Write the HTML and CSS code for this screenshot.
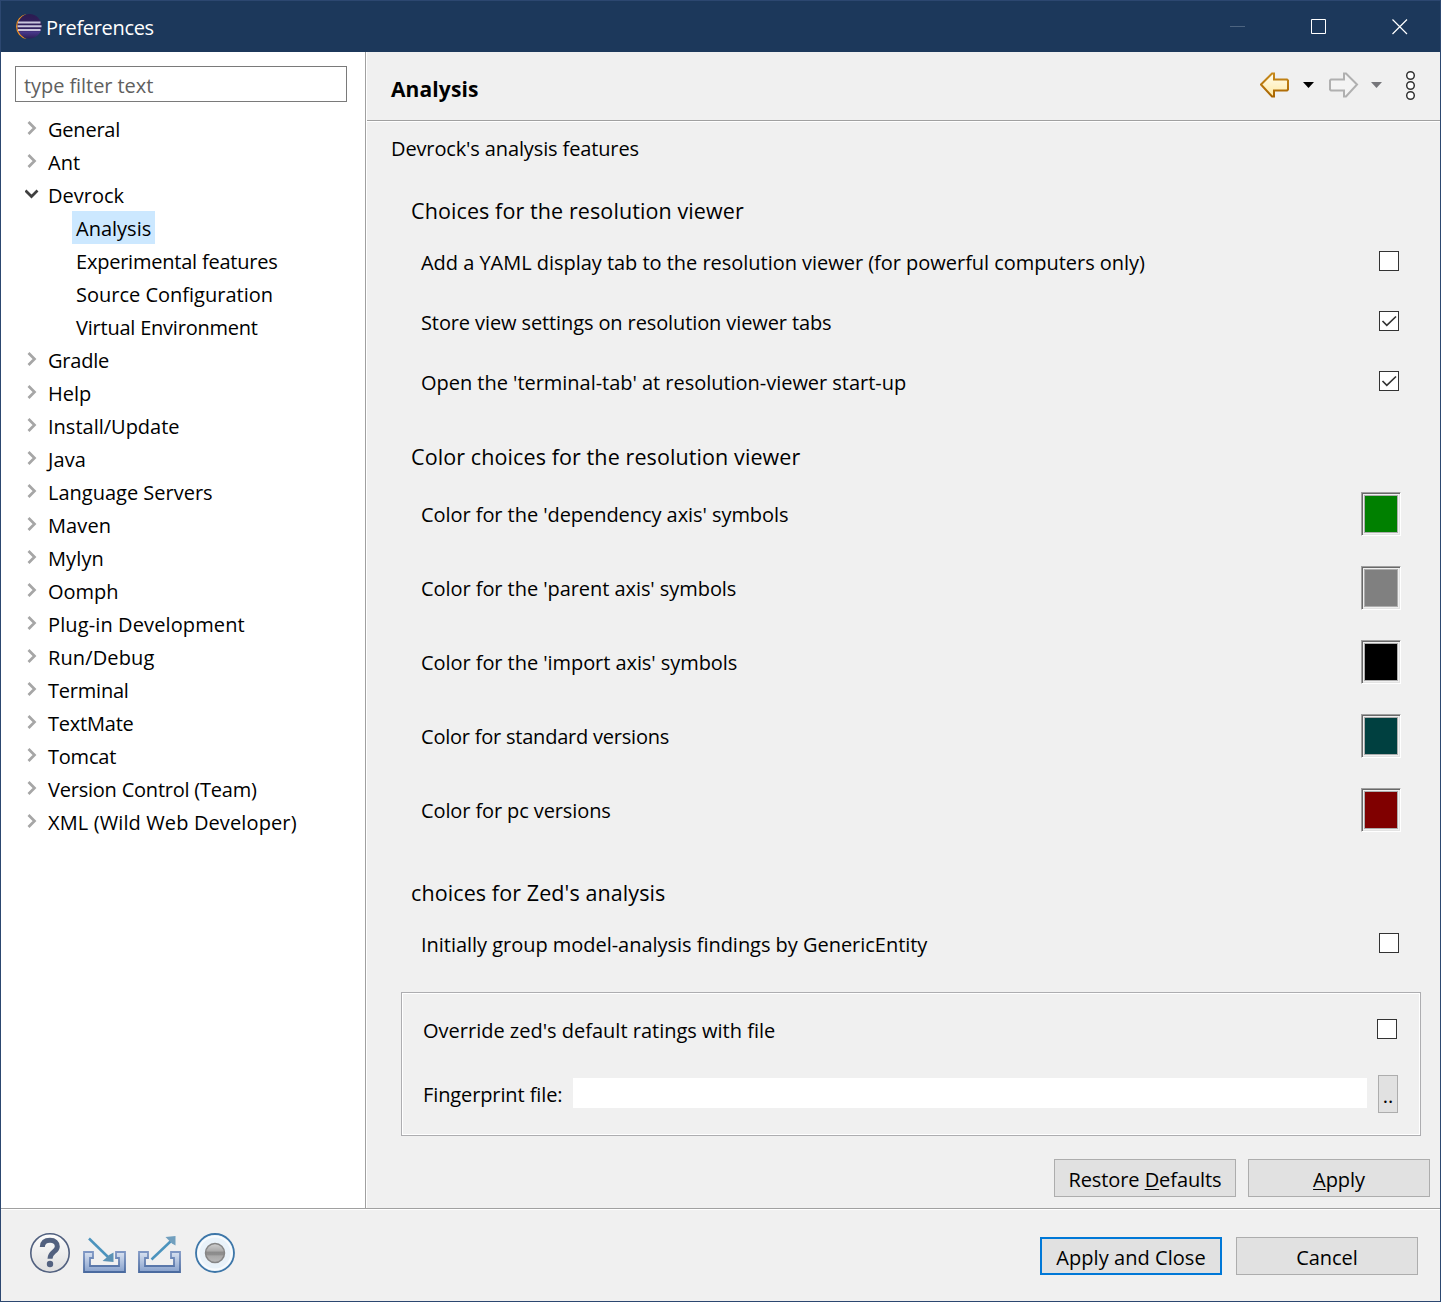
FILE: index.html
```html
<!DOCTYPE html>
<html lang="en">
<head>
<meta charset="utf-8">
<title>Preferences</title>
<link rel="stylesheet" href="styles.css">
</head>
<body>
<svg class="defs" width="0" height="0" aria-hidden="true">
  <defs>
    <linearGradient id="gold" x1="0" y1="0" x2="0" y2="1"><stop offset="0" stop-color="#fffdf0"/><stop offset="1" stop-color="#ffe9a3"/></linearGradient>
    <linearGradient id="goldEdge" x1="0" y1="0" x2="0" y2="1"><stop offset="0" stop-color="#c78a1c"/><stop offset="1" stop-color="#a86400"/></linearGradient>
    <linearGradient id="tray" x1="0" y1="0" x2="0" y2="1"><stop offset="0" stop-color="#d9e2f1"/><stop offset="1" stop-color="#87a1cc"/></linearGradient>
    <linearGradient id="trayEdge" x1="0" y1="0" x2="0" y2="1"><stop offset="0" stop-color="#7f97c4"/><stop offset="1" stop-color="#4a6a9f"/></linearGradient>
    <linearGradient id="ball" x1="0" y1="0" x2="0" y2="1"><stop offset="0" stop-color="#d0d0d0"/><stop offset=".4" stop-color="#aaa"/><stop offset=".45" stop-color="#8b8b8b"/><stop offset=".6" stop-color="#8f8f8f"/><stop offset=".65" stop-color="#a8a8a8"/><stop offset="1" stop-color="#b8b8b8"/></linearGradient>
    <linearGradient id="help" x1="0" y1="0" x2="0" y2="1"><stop offset="0" stop-color="#fdfdfd"/><stop offset="1" stop-color="#dedede"/></linearGradient>
    <linearGradient id="planet" x1="0" y1="0" x2="0" y2="1"><stop offset="0" stop-color="#2b1b51"/><stop offset=".6" stop-color="#32225f"/><stop offset=".75" stop-color="#473788"/><stop offset="1" stop-color="#2d1f58"/></linearGradient>
    <symbol id="chev" viewBox="0 0 14 16"><path d="M3.5 2 L9.5 8 L3.5 14" fill="none" stroke="#a6a6a6" stroke-width="2.7"/></symbol>
  </defs>
</svg>
<div class="window">
  <header class="titlebar">
    <svg class="logo" width="28" height="28" viewBox="0 0 28 28">
      <path d="M12.500 1 A12.700 12.700 0 0 0 12.500 26 A14 14 0 0 1 12.500 1Z" fill="#f7941e"/>
      <circle cx="15.500" cy="13.300" r="12.200" fill="url(#planet)"/>
      <path d="M4 9.500H26.500M3.500 13.200H27.500M4 16.900H26.500" stroke="#c9c5dc" stroke-width="2"/>
    </svg>
    <h1 class="title">Preferences</h1>
    <div class="controls">
      <svg width="16" height="16" viewBox="0 0 16 16"><path d="M0 7.500H15" stroke="#4d6480" fill="none"/></svg>
      <svg width="16" height="16" viewBox="0 0 16 16"><path d="M.5 .5H14.500V14.500H.5Z" stroke="#fff" fill="none"/></svg>
      <svg width="16" height="16" viewBox="0 0 16 16"><path d="M.5 .5L15 15M15 .5L.5 15" stroke="#fff" stroke-width="1.200" fill="none"/></svg>
    </div>
  </header>
  <div class="body">
    <aside class="sidebar">
      <div class="filter">type filter text</div>
      <ul class="tree">
        <li><svg class="chev"><use href="#chev"/></svg><span class="tight">General</span></li>
        <li><svg class="chev"><use href="#chev"/></svg><span>Ant</span></li>
        <li><svg class="chev" viewBox="0 0 14 16"><path d="M.5 4.500 L6.500 10.500 L12.500 4.500" fill="none" stroke="#404040" stroke-width="2.700"/></svg><span>Devrock</span></li>
        <li class="child"><span class="selected">Analysis</span></li>
        <li class="child"><span class="tight">Experimental features</span></li>
        <li class="child"><span>Source Configuration</span></li>
        <li class="child"><span class="tight">Virtual Environment</span></li>
        <li><svg class="chev"><use href="#chev"/></svg><span class="tight">Gradle</span></li>
        <li><svg class="chev"><use href="#chev"/></svg><span>Help</span></li>
        <li><svg class="chev"><use href="#chev"/></svg><span>Install/Update</span></li>
        <li><svg class="chev"><use href="#chev"/></svg><span class="loose">Java</span></li>
        <li><svg class="chev"><use href="#chev"/></svg><span>Language Servers</span></li>
        <li><svg class="chev"><use href="#chev"/></svg><span class="loose">Maven</span></li>
        <li><svg class="chev"><use href="#chev"/></svg><span class="loose">Mylyn</span></li>
        <li><svg class="chev"><use href="#chev"/></svg><span>Oomph</span></li>
        <li><svg class="chev"><use href="#chev"/></svg><span class="loose">Plug-in Development</span></li>
        <li><svg class="chev"><use href="#chev"/></svg><span class="loose">Run/Debug</span></li>
        <li><svg class="chev"><use href="#chev"/></svg><span class="tight">Terminal</span></li>
        <li><svg class="chev"><use href="#chev"/></svg><span class="tight">TextMate</span></li>
        <li><svg class="chev"><use href="#chev"/></svg><span class="tight">Tomcat</span></li>
        <li><svg class="chev"><use href="#chev"/></svg><span class="tight">Version Control (Team)</span></li>
        <li><svg class="chev"><use href="#chev"/></svg><span class="loose">XML (Wild Web Developer)</span></li>
      </ul>
    </aside>
    <main class="page">
      <div class="page-head">
        <h2>Analysis</h2>
        <svg class="nav" width="160" height="32" viewBox="0 0 160 32">
          <path d="M2 16 L13 5 H15 V11 H28 L29 12 V21 L28 22 H15 V28 H13 Z" transform="translate(-1 -.5)" fill="url(#gold)" stroke="url(#goldEdge)" stroke-width="2"/>
          <path d="M43 13H54L48.500 19Z" fill="#000"/>
          <path d="M97 16 L86 5 H84 V11 H71 L70 12 V21 L71 22 H84 V28 H86 Z" transform="translate(0 -.5)" fill="#f4f4f4" stroke="#b0b0b0" stroke-width="2"/>
          <path d="M111 13H122L116.500 19Z" fill="#76767a"/>
          <g fill="#fff" stroke="#333" stroke-width="1.500"><circle cx="150.500" cy="6.500" r="3.800"/><circle cx="150.500" cy="16.500" r="3.800"/><circle cx="150.500" cy="26.500" r="3.800"/></g>
        </svg>
      </div>
      <p class="intro">Devrock's analysis features</p>
      <h3 class="first">Choices for the resolution viewer</h3>
      <div class="row"><span>Add a YAML display tab to the resolution viewer (for powerful computers only)</span><i class="check"></i></div>
      <div class="row"><span class="snug">Store view settings on resolution viewer tabs</span><i class="check"><svg viewBox="0 0 18 18"><path d="M2.500 9L6.800 13.300L16 4.500" fill="none" stroke="#333" stroke-width="1.700"/></svg></i></div>
      <div class="row"><span>Open the 'terminal-tab' at resolution-viewer start-up</span><i class="check"><svg viewBox="0 0 18 18"><path d="M2.500 9L6.800 13.300L16 4.500" fill="none" stroke="#333" stroke-width="1.700"/></svg></i></div>
      <h3 class="second">Color choices for the resolution viewer</h3>
      <div class="row color"><span>Color for the 'dependency axis' symbols</span><i class="swatch green"></i></div>
      <div class="row color"><span>Color for the 'parent axis' symbols</span><i class="swatch gray"></i></div>
      <div class="row color"><span>Color for the 'import axis' symbols</span><i class="swatch black"></i></div>
      <div class="row color"><span class="tight">Color for standard versions</span><i class="swatch teal"></i></div>
      <div class="row color"><span class="snug">Color for pc versions</span><i class="swatch maroon"></i></div>
      <h3 class="third">choices for Zed's analysis</h3>
      <div class="row"><span>Initially group model-analysis findings by GenericEntity</span><i class="check"></i></div>
      <section class="group">
        <div class="override"><span>Override zed's default ratings with file</span><i class="check"></i></div>
        <div class="file"><span class="snug">Fingerprint file:</span><div class="field"></div><button class="browse">..</button></div>
      </section>
      <div class="page-actions">
        <button class="btn">Restore <u>D</u>efaults</button>
        <button class="btn"><u>A</u>pply</button>
      </div>
    </main>
  </div>
  <footer class="footer">
    <div class="tools">
      <svg width="40" height="40" viewBox="0 0 40 40"><circle cx="20" cy="20" r="19.200" fill="url(#help)" stroke="#51607f" stroke-width="1.600"/><path d="M12.300 14C12.500 9.500 15.500 7.300 20 7.300C24.800 7.300 27.300 9.800 27.300 13.500C27.300 19 20 18.500 20 25.800" fill="none" stroke="#52617f" stroke-width="5"/><circle cx="20" cy="31" r="3.200" fill="#52617f"/></svg>
      <svg class="import" width="43" height="40" viewBox="0 0 43 40"><path d="M1 19H10V25H7V33H36V25H33V19H42V39H1Z" fill="url(#tray)" stroke="url(#trayEdge)" stroke-width="1.800"/><path d="M6 5.500L25 24" stroke="#4b93bd" stroke-width="2.500"/><path d="M30.500 29V19.500L26 22L22.500 25.500L19.500 28Z" fill="#5b92b5"/></svg>
      <svg width="43" height="40" viewBox="0 0 43 40"><path d="M1 19H10V25H7V33H36V25H33V19H42V39H1Z" fill="url(#tray)" stroke="url(#trayEdge)" stroke-width="1.800"/><path d="M13.500 26.500L33 8" stroke="#4b93bd" stroke-width="2.500"/><path d="M37.500 3V12.500L34 10.500L30 6.500L27.500 4Z" fill="#719fbe"/></svg>
      <svg class="record" width="40" height="40" viewBox="0 0 40 40"><circle cx="20" cy="20" r="19" fill="#e9f2f9" stroke="#3d76a8" stroke-width="1.800"/><circle cx="20" cy="20" r="16.500" fill="none" stroke="#f8fbfd" stroke-width="2"/><circle cx="20" cy="20" r="9.500" fill="url(#ball)" stroke="#858585" stroke-width="1.500"/></svg>
    </div>
    <div class="actions">
      <button class="btn primary">Apply and Close</button>
      <button class="btn">Cancel</button>
    </div>
  </footer>
</div>
</body>
</html>
```
FILE: styles.css
```css
* { box-sizing: border-box; }
body, h1, h2, h3, p, ul { margin: 0; padding: 0; font-weight: normal; }
body, button { font-family: "Open Sans", "Noto Sans", sans-serif; font-size: 20px; color: #000; }
body { width: 1441px; height: 1302px; overflow: hidden; }
.defs { position: absolute; }
svg { display: block; flex: none; }
span { white-space: nowrap; }
.window { width: 1441px; height: 1302px; border: 1px solid #2c4770; background: #f0f0f0; display: flex; flex-direction: column; }
.titlebar { height: 51px; flex: none; background: #1c385b; color: #fff; display: flex; align-items: center; padding: 0 32px 0 13px; }
.title { font-size: 20px; margin-left: 4px; padding-top: 2px; line-height: 30px; letter-spacing: -.33px; }
.controls { margin-left: auto; display: flex; gap: 65px; }
.body { height: 1156px; flex: none; display: flex; }
.sidebar { width: 365px; flex: none; background: #fff; border-right: 1px solid #a0a0a0; padding: 14px 18px 0 14px; }
.filter { height: 36px; border: 1px solid #7a7a7a; color: #606060; line-height: 35px; padding: 1px 8px 0; white-space: nowrap; letter-spacing: -.07px; }
.tree { list-style: none; margin-top: 10px; }
.tree li { height: 33px; line-height: 33px; display: flex; padding-left: 10px; }
.tree span { height: 33px; padding: 1px 4px 0; }
.tree .chev { width: 14px; height: 16px; margin: 8px 5px 0 0; }
.tree .child { padding-left: 57px; }
.tree .selected { background: #cce8ff; }
.page { flex: 1; min-width: 0; border-left: 1px solid #fff; }
.page-head { height: 70px; border-bottom: 1px solid #fff; box-shadow: inset 0 -1px #a0a0a0; display: flex; justify-content: space-between; padding: 17px 20px 0 24px; }
.page-head h2 { font-size: 21px; font-weight: 700; line-height: 38px; padding-top: 1px; letter-spacing: .12px; }
.intro { height: 52px; line-height: 52px; padding: 1px 0 0 24px; letter-spacing: -.13px; }
h3 { font-size: 21.5px; padding-left: 44px; letter-spacing: .1px; }
.first { height: 58px; padding-top: 15px; line-height: 43px; }
.second { height: 65px; padding-top: 24px; line-height: 42px; }
.third { height: 67px; padding-top: 24px; line-height: 44px; }
.row { height: 60px; display: flex; align-items: center; justify-content: space-between; padding: 0 41px 0 54px; letter-spacing: -.03px; }
.check { display: block; width: 20px; height: 20px; border: 1px solid #333; background: #fff; margin-bottom: 2px; }
.color { height: 74px; padding-right: 39px; letter-spacing: -.06px; }
.snug { letter-spacing: -.11px; }
.tight { letter-spacing: -.22px; }
.loose { letter-spacing: .12px; }
.swatch { width: 40px; height: 44px; border: 1px solid; border-color: #a0a0a0 #fff #fff #a0a0a0; box-shadow: inset 1px 1px #696969, inset -1px -1px #e3e3e3, inset 0 0 0 2px #f0f0f0, inset 0 0 0 3px #adadad; }
.green { background: #008000; }
.gray { background: #808080; }
.black { background: #000; }
.teal { background: #004040; }
.maroon { background: #800000; }
.group { width: 1020px; height: 144px; margin: 18px 0 0 34px; border: 1px solid #adadb0; box-shadow: inset 0 0 0 1px #fff; padding: 7px 22px 0 21px; }
.override { height: 60px; display: flex; align-items: center; justify-content: space-between; padding-right: 1px; }
.file { height: 68px; display: flex; align-items: center; }
.field { width: 794px; height: 30px; background: #fff; margin: 0 11px 2px auto; }
button { border: 1px solid #adadad; background: #e1e1e1; padding: 0; display: block; white-space: nowrap; }
.browse { width: 20px; height: 38px; padding-top: 2px; font-size: 20px; }
.page-actions { display: flex; justify-content: flex-end; gap: 12px; padding: 23px 10px 0 0; }
.btn { width: 182px; height: 38px; line-height: 36px; padding-top: 2px; letter-spacing: -.08px; }
.btn u { text-underline-offset: 2px; text-decoration-thickness: 1px; text-decoration-skip-ink: none; }
.footer { flex: 1; border-top: 1px solid #a0a0a0; box-shadow: inset 0 1px #fff; display: flex; justify-content: space-between; padding: 24px 22px 0 29px; }
.tools { display: flex; gap: 12px; }
.import { margin-left: 1px; }
.record { margin-left: 2px; }
.actions { display: flex; gap: 14px; padding-top: 4px; }
.primary { border: 2px solid #0078d7; line-height: 34px; letter-spacing: .05px; }
```
